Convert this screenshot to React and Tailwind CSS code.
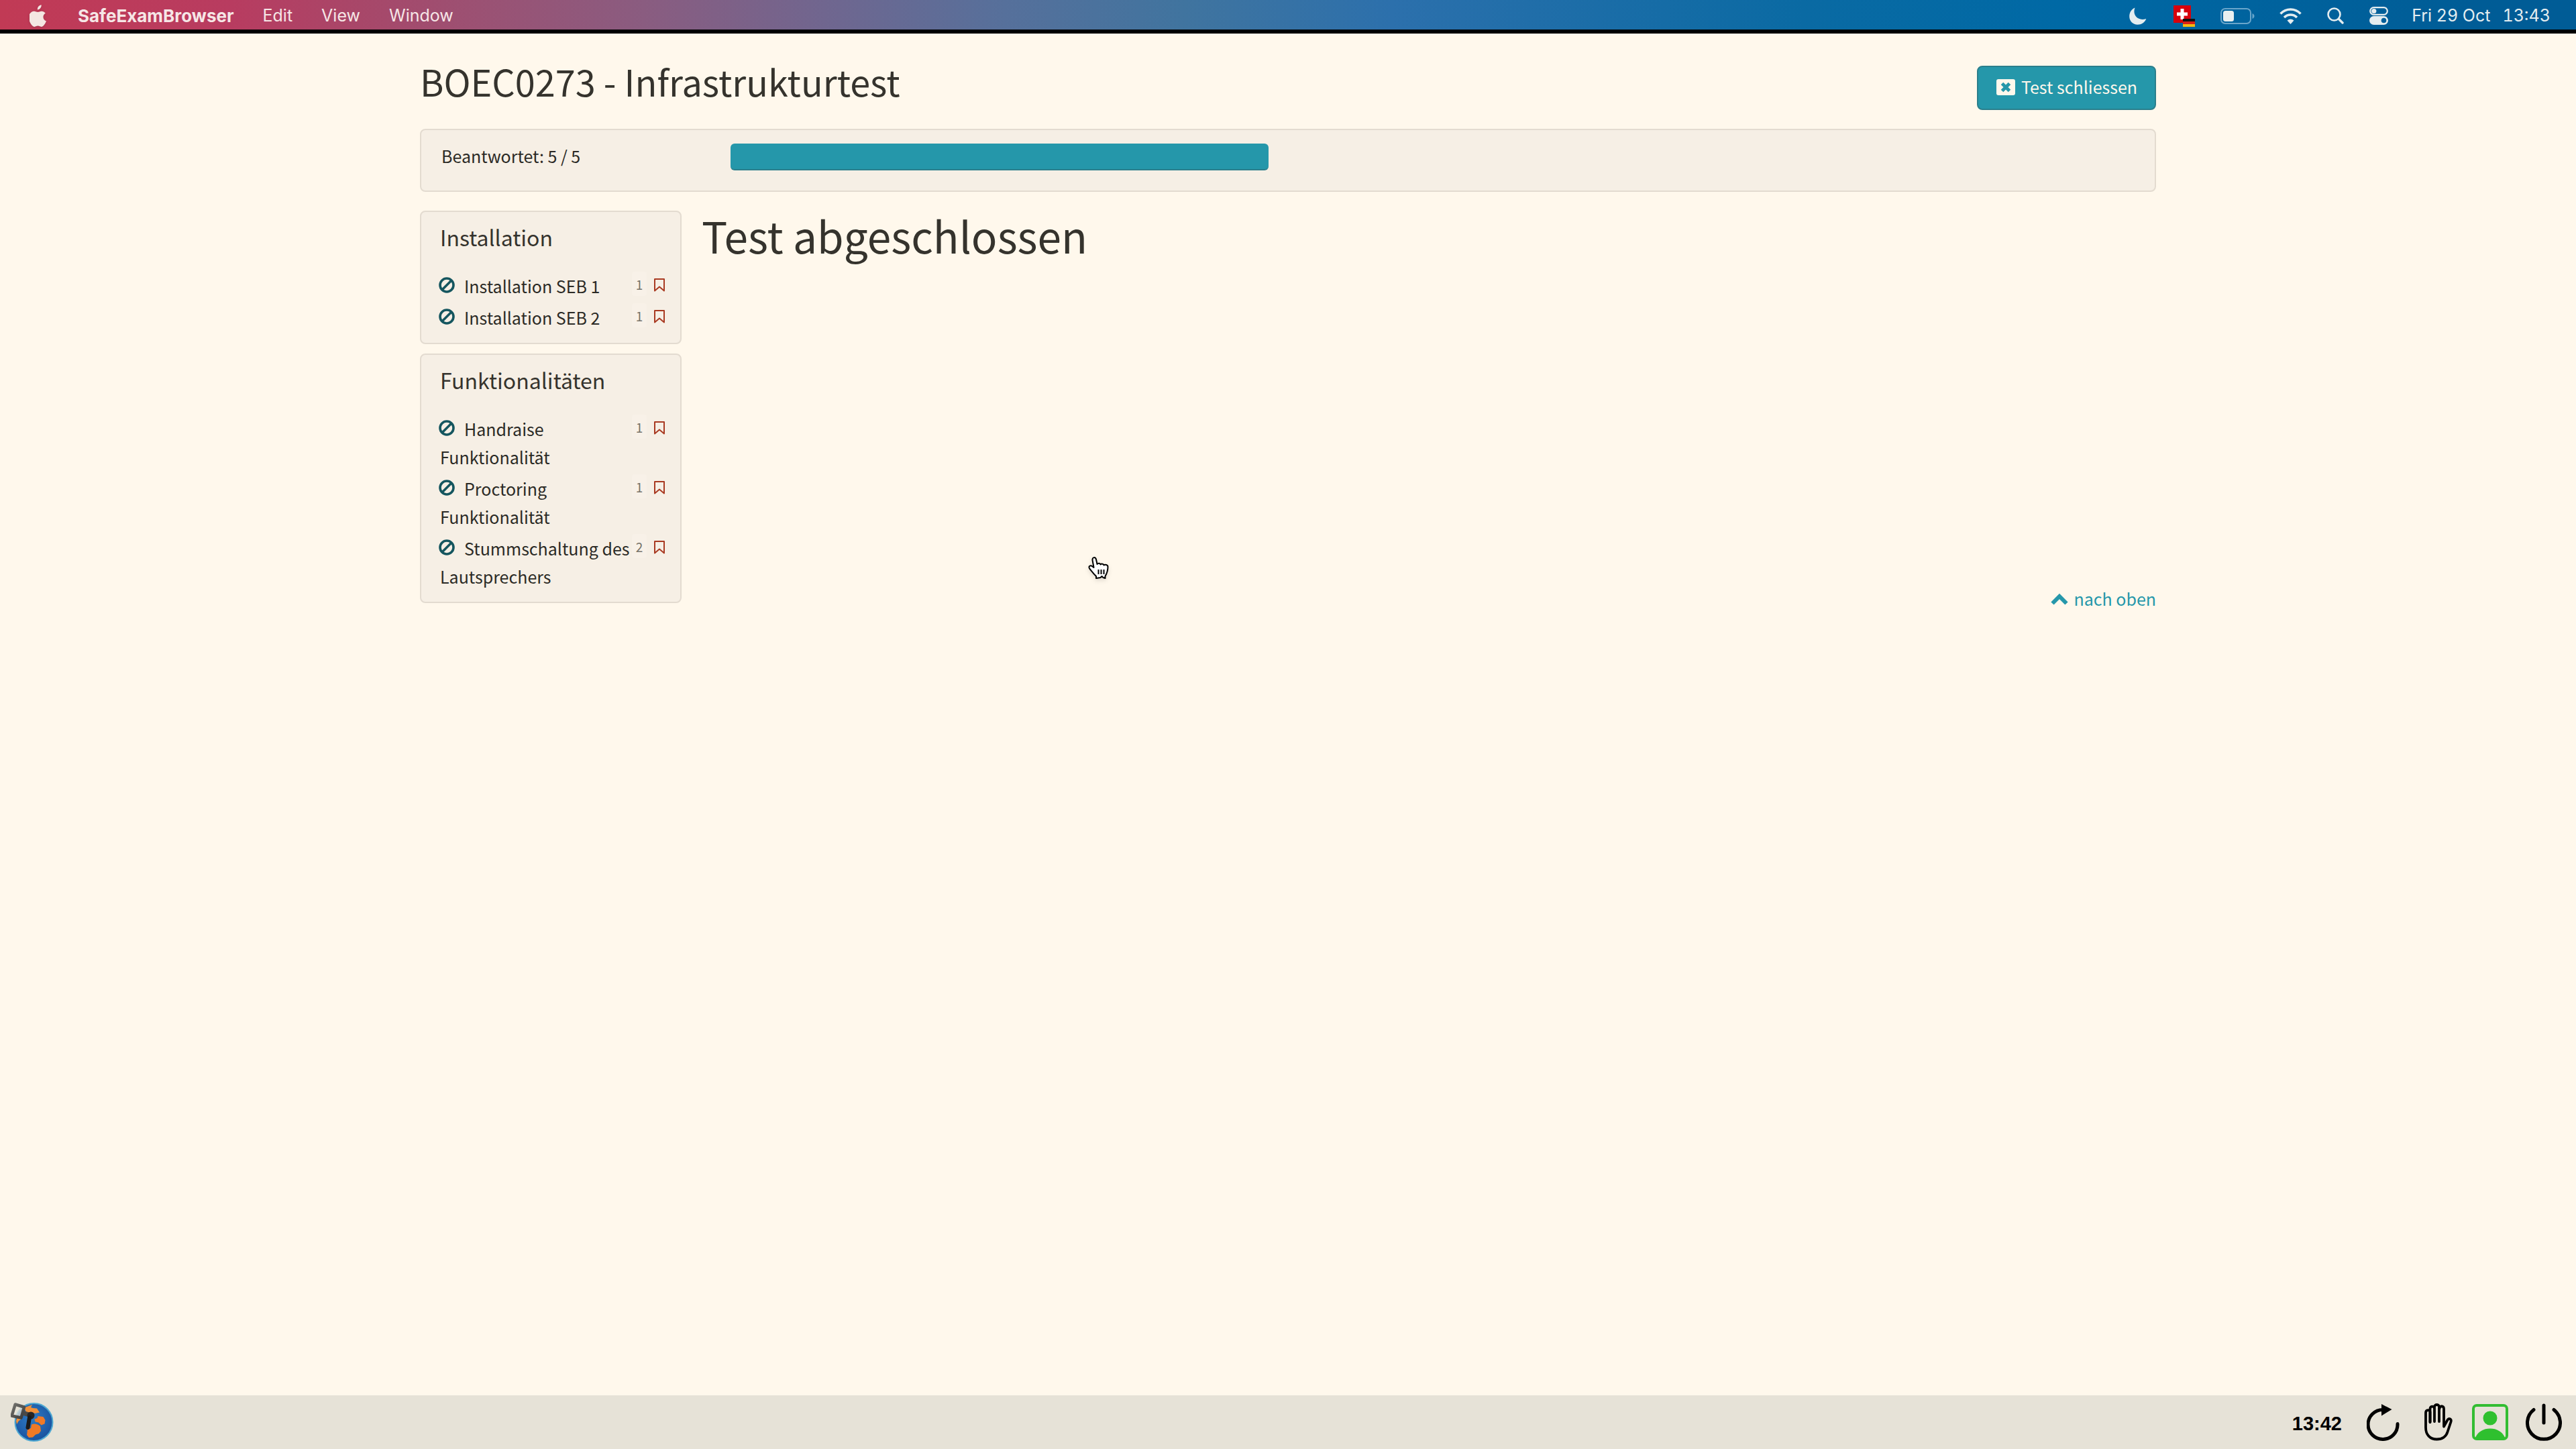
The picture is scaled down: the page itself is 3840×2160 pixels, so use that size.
function Apple() {
  return (
    <svg viewBox="0 0 26 33" className="h-[33px] w-[26px] fill-[#f4e6e2] drop-shadow">
      <path d="M17.6 0.2c.3 1.9-.4 3.700-1.500 5.100-1.100 1.400-2.700 2.300-4.200 2.200-.3-1.800.5-3.700 1.500-4.900C14.500 1.200 16.200.3 17.600.2z" />
      <path d="M25 24.600c-.7 1.700-1.100 2.400-2 3.900-1.300 2-3.100 4.400-5.300 4.400-2 0-2.500-1.300-5.200-1.300s-3.300 1.300-5.200 1.300c-2.200 0-3.900-2.200-5.200-4.200-3.500-5.400-3.900-11.700-1.700-15.100 1.500-2.400 4-3.800 6.300-3.800 2.300 0 3.800 1.300 5.700 1.300 1.900 0 3-1.300 5.700-1.300 2 0 4.200 1.100 5.700 3-5 2.800-4.200 9.900 1.200 11.800z" />
    </svg>
  );
}

function Ban() {
  return (
    <svg viewBox="0 0 24 24" className="mr-[14px] -ml-[2px] inline-block h-6 w-6 align-baseline" fill="none" stroke="#15565f" strokeWidth="3.600">
      <circle cx="12" cy="12" r="10" />
      <path d="M5.500 18.500 18.500 5.500" />
    </svg>
  );
}

function Bookmark() {
  return (
    <svg viewBox="0 0 18 20" className="h-5 w-[18px]" fill="none" stroke="#a93a22" strokeWidth="2" strokeLinejoin="round">
      <path d="M2 1h14v17.500l-7-6-7 6z" />
    </svg>
  );
}

function MenuBar() {
  return (
    <header className="flex h-[50px] items-center border-b-[6px] border-black bg-[linear-gradient(90deg,#c13a55_0%,#b83c60_9%,#a84769_14%,#9a5274_19%,#8a5c80_25%,#70668f_32%,#56709b_39%,#40749f_46%,#2c70ac_54%,#0a6aa3_70%,#0069a5_80%,#005c96_96%,#005c96_100%)] pt-[3px] pr-[38px] pl-11 font-[Inter,sans-serif] text-[26px] text-[#f6e6e6]">
      <Apple />
      <nav className="ml-[46px] flex items-center gap-[43px] text-[25px] text-shadow-sm">
        <button className="text-[26px] font-bold">SafeExamBrowser</button>
        <button>Edit</button>
        <button>View</button>
        <button>Window</button>
      </nav>
      <div className="ml-auto flex items-center text-[#e4edf0]">
        <svg viewBox="0 0 26 26" className="mr-[40px] h-[26px] w-[26px] fill-current">
          <path d="M8.500 0.500C-2 5-2.500 20 7 24.500c7 3.200 15.500 0 18.300-7.500C12 21 4.500 11 8.500.5z" />
        </svg>
        <svg viewBox="0 0 32 32" className="mr-[38px] h-8 w-8">
          <rect width="26" height="26" fill="#d8000c" />
          <path d="M10.500 5h5v5.500H21v5h-5.500V21h-5v-5.500H5v-5h5.500z" fill="#fff" />
          <rect x="14" y="20" width="18" height="4" fill="#111" />
          <rect x="14" y="24" width="18" height="4" fill="#d92015" />
          <rect x="14" y="28" width="18" height="4" fill="#f2b90f" />
        </svg>
        <svg viewBox="0 0 51 24" className="mr-[37px] h-6 w-[51px]">
          <rect x="1" y="1" width="44" height="22" rx="6" fill="none" stroke="#6aa6cb" strokeWidth="2" />
          <rect x="4" y="4" width="16" height="16" rx="3.500" fill="#e9eff0" />
          <path d="M47.500 8c4 1.500 4 6.500 0 8z" fill="#6aa6cb" />
        </svg>
        <svg viewBox="0 0 33 24" className="mr-[38px] h-6 w-[33px]" fill="none" stroke="currentColor" strokeWidth="3.600">
          <path d="M1.500 8.500C10-.2 23-.2 31.500 8.500" />
          <path d="M7 14c5.500-5.300 13.500-5.300 19 0" />
          <path d="M11.500 18.500c3-2.700 7-2.700 10 0l-5 5.500z" fill="currentColor" stroke="none" />
        </svg>
        <svg viewBox="0 0 25 25" className="mr-[38px] h-[25px] w-[25px]" fill="none" stroke="currentColor" strokeLinecap="round">
          <circle cx="10.500" cy="10.500" r="9" strokeWidth="2.600" />
          <path d="m17.500 17.500 5.500 5.500" strokeWidth="3.400" />
        </svg>
        <svg viewBox="0 0 28 27" className="mr-[35px] h-[27px] w-7">
          <rect x="1.200" y="1.200" width="25.600" height="10.600" rx="5.300" fill="none" stroke="currentColor" strokeWidth="2.200" />
          <circle cx="6.800" cy="6.500" r="3.600" fill="currentColor" />
          <rect y="14" width="28" height="13" rx="6.500" fill="currentColor" />
          <circle cx="21.500" cy="20.500" r="3.800" fill="#005f9b" />
        </svg>
        <time className="flex gap-[18px] text-[25px] tabular-nums">
          <span>Fri 29 Oct</span>
          <span>13:43</span>
        </time>
      </div>
    </header>
  );
}

const sections = [
  {
    title: "Installation",
    items: [
      ["Installation SEB 1", 1],
      ["Installation SEB 2", 1],
    ],
  },
  {
    title: "Funktionalitäten",
    items: [
      ["Handraise Funktionalität", 1],
      ["Proctoring Funktionalität", 1],
      ["Stummschaltung des Lautsprechers", 2],
    ],
  },
];

function Section({ title, items }) {
  return (
    <section className="rounded-lg border-2 border-[#e3dbd0] bg-[#f6efe5] pt-3 pr-[22px] pb-[17px] pl-7">
      <h2 className="mb-[27px] text-[32px] leading-[50px]">{title}</h2>
      <ul className="flex flex-col gap-[5px]">
        {items.map(([label, points]) => (
          <li key={label} className="flex items-start">
            <a href="#" className="-mr-2 block min-w-0 flex-1 text-[25px] leading-[42px] text-[#2b2a25]">
              <Ban />
              {label}
            </a>
            <span className="flex h-9 w-[22px] shrink-0 items-center justify-center rounded bg-[#f8f1e8] text-[19px] leading-none text-[#77736a]">
              {points}
            </span>
            <button aria-label="Markieren" className="mt-[10px] ml-[10px] shrink-0">
              <Bookmark />
            </button>
          </li>
        ))}
      </ul>
    </section>
  );
}

function Globe() {
  return (
    <svg viewBox="0 0 64 60" className="h-[60px] w-16">
      <defs>
        <radialGradient id="sea" cx="0.45" cy="0.4" r="0.65">
          <stop offset="0" stopColor="#2f7cc4" />
          <stop offset="1" stopColor="#174f9c" />
        </radialGradient>
        <linearGradient id="key" x1="0" y1="0" x2="1" y2="1">
          <stop offset="0" stopColor="#74736f" />
          <stop offset="1" stopColor="#3a3938" />
        </linearGradient>
      </defs>
      <circle cx="34.500" cy="30" r="28" fill="url(#sea)" stroke="#4fa9d2" strokeWidth="2" />
      <path d="M20 8.500 32 4l-2 4 3 1 6 .5 4 6-7 1.500-5-2-7 2z" fill="#f0913a" />
      <path d="M8 28l2-6 8-1-3 5-3 2-3 5z" fill="#f0913a" />
      <path d="M35.500 25.500l4-1.500 1-3 8 1 3 5-1 5.500-5 2-4-4-5-1z" fill="#f07a26" />
      <path d="M31 33.500c4-2 9-1 13 2.500l1 7-3 4-5 1.500-4 4-6 .5-3-4 1-8 5-2z" fill="#f07a26" />
      <path d="m6.700 3.500 13.300 4-4.500 16-14-3z" fill="#e6e2d7" fillOpacity=".75" stroke="url(#key)" strokeWidth="4.500" strokeLinejoin="round" />
      <path d="m19 16.500 12 3.500" fill="none" stroke="#4a4947" strokeWidth="7" />
      <circle cx="30" cy="20" r="5.500" fill="#262524" />
      <path d="m28 23-2.500 15" fill="none" stroke="#1b1a19" strokeWidth="6" strokeLinecap="round" />
    </svg>
  );
}

function TaskBar() {
  return (
    <footer className="flex h-20 items-center bg-[#e6e2d7] pr-[21px] pl-4">
      <button aria-label="Safe Exam Browser">
        <Globe />
      </button>
      <div className="ml-auto flex items-center">
        <time className="mr-[37px] pt-1.5 font-['Liberation_Sans',sans-serif] text-[29px] font-bold text-black">13:42</time>
        <button aria-label="Neu laden" className="mr-[36px]">
          <svg viewBox="0 0 50 56" className="h-14 w-[50px]" fill="none" stroke="#000" strokeWidth="5" strokeLinecap="round">
            <path d="M46 30.500A22 22 0 1 1 24 9.500" />
            <path d="M22 1 37.500 9 22 18.500z" fill="#000" stroke="none" />
          </svg>
        </button>
        <button aria-label="Hand heben" className="mr-[29px]">
          <svg viewBox="0 0 42 56" className="h-14 w-[42px]" fill="none" stroke="#000" strokeWidth="3.800" strokeLinecap="round" strokeLinejoin="round">
            <path d="M8.500 28V13c0-4-6.500-4-6.500 1v22c0 11 6.500 17.500 16.500 17.500 8 0 14-4 16-11l5-15c1.500-5-3.500-6-5.500-2l-5 9V8c0-5-6.500-5-6.500 0" />
            <path d="M8.500 28V8c0-4.500 6.500-4.500 6.500 0v19V5c0-4 7-4 7 0v22" />
          </svg>
        </button>
        <button aria-label="Proctoring" className="mr-[26px]">
          <svg viewBox="0 0 54 54" className="h-[54px] w-[54px]">
            <rect x="2" y="2" width="50" height="50" rx="5" fill="none" stroke="#32bd32" strokeWidth="4" />
            <circle cx="27" cy="21" r="10.500" fill="#2fc02f" />
            <path d="M5 50C9 41 17 36.500 27 36.500S45 41 49 50v2H5z" fill="#2fc02f" />
          </svg>
        </button>
        <button aria-label="Beenden">
          <svg viewBox="0 0 54 56" className="h-14 w-[54px]" fill="none" stroke="#000" strokeWidth="5" strokeLinecap="round">
            <path d="M27 3v26" />
            <path d="M12 9.500a24.500 24.500 0 1 0 30 0" />
          </svg>
        </button>
      </div>
    </footer>
  );
}

function HandCursor() {
  return (
    <svg viewBox="0 0 32 34" className="pointer-events-none absolute top-[516px] left-[996px] h-[34px] w-8 drop-shadow-md" fill="#fff" stroke="#000" strokeWidth="2" strokeLinejoin="round">
      <path d="M12 32v-3C8 25 5 21 2.500 18c-3-4 1-6 4-3.500l2 1.500L6.500 5C6 0 11 0 12 4l1.500 7c1.500-2 4.500-1.500 5 .5 1.500-1.500 4.500-1 5 1 2-1.500 6-.5 6 2.500 0 6-1 9-4 14v3l-3-1-2-2-2 2z" />
      <path d="M15.500 19v7M19.500 19v7M23.500 19v7" />
    </svg>
  );
}

export default function App() {
  return (
    <div className='flex min-h-screen flex-col bg-[#fff8ec] font-["Noto_Sans_CJK_SC",sans-serif] text-[#35332d]'>
      <MenuBar />
      <div className="mx-[626px] flex-1">
        <div className="flex h-[142px] items-start justify-between pt-12">
          <h1 className="-mt-[10px] text-[54px] leading-[66px]">BOEC0273 - Infrastrukturtest</h1>
          <button className="flex h-[66px] items-center gap-2 rounded-lg border-2 border-[#2a7f8c] bg-[#2597aa] px-[26px] pb-[3px] text-[25px] text-[#fff8ec]">
            <svg viewBox="0 0 30 24" className="h-6 w-[30px]">
              <rect x="1" width="28" height="24" rx="3" fill="#fff8ec" />
              <path d="m9.500 6.500 11 11m0-11-11 11" stroke="#2597aa" strokeWidth="5" />
            </svg>
            Test schliessen
          </button>
        </div>
        <div className="flex h-[94px] items-start rounded-lg border-2 border-[#e3dbd0] bg-[#f6efe5] pt-5 pl-[30px]">
          <span className="w-[431px] shrink-0 text-[25px] leading-9 text-[#2b2a25]">Beantwortet: 5 / 5</span>
          <div role="progressbar" aria-valuenow={5} aria-valuemax={5} aria-label="Beantwortet" className="h-10 w-[31.4%] rounded-md border-b-2 border-[#2a7f8c] bg-[#2597aa]" />
        </div>
        <div className="relative mt-7 flex items-stretch">
          <aside className="flex w-[390px] shrink-0 flex-col gap-[14px] pb-1.5">
            {sections.map((s) => (
              <Section key={s.title} {...s} />
            ))}
          </aside>
          <main className="flex flex-1 flex-col pl-[30px]">
            <h1 className="text-[64px] leading-[72px]">Test abgeschlossen</h1>
          </main>
          <a href="#" className="flex items-center gap-2 self-end text-[25px] leading-none text-[#2597aa]">
            <svg viewBox="0 0 26 18" className="h-[18px] w-[26px]" fill="none" stroke="currentColor" strokeWidth="6">
              <path d="m2.500 15.500L13 5l10.500 10.500" />
            </svg>
            nach oben
          </a>
          <HandCursor />
        </div>
      </div>
      <TaskBar />
    </div>
  );
}
